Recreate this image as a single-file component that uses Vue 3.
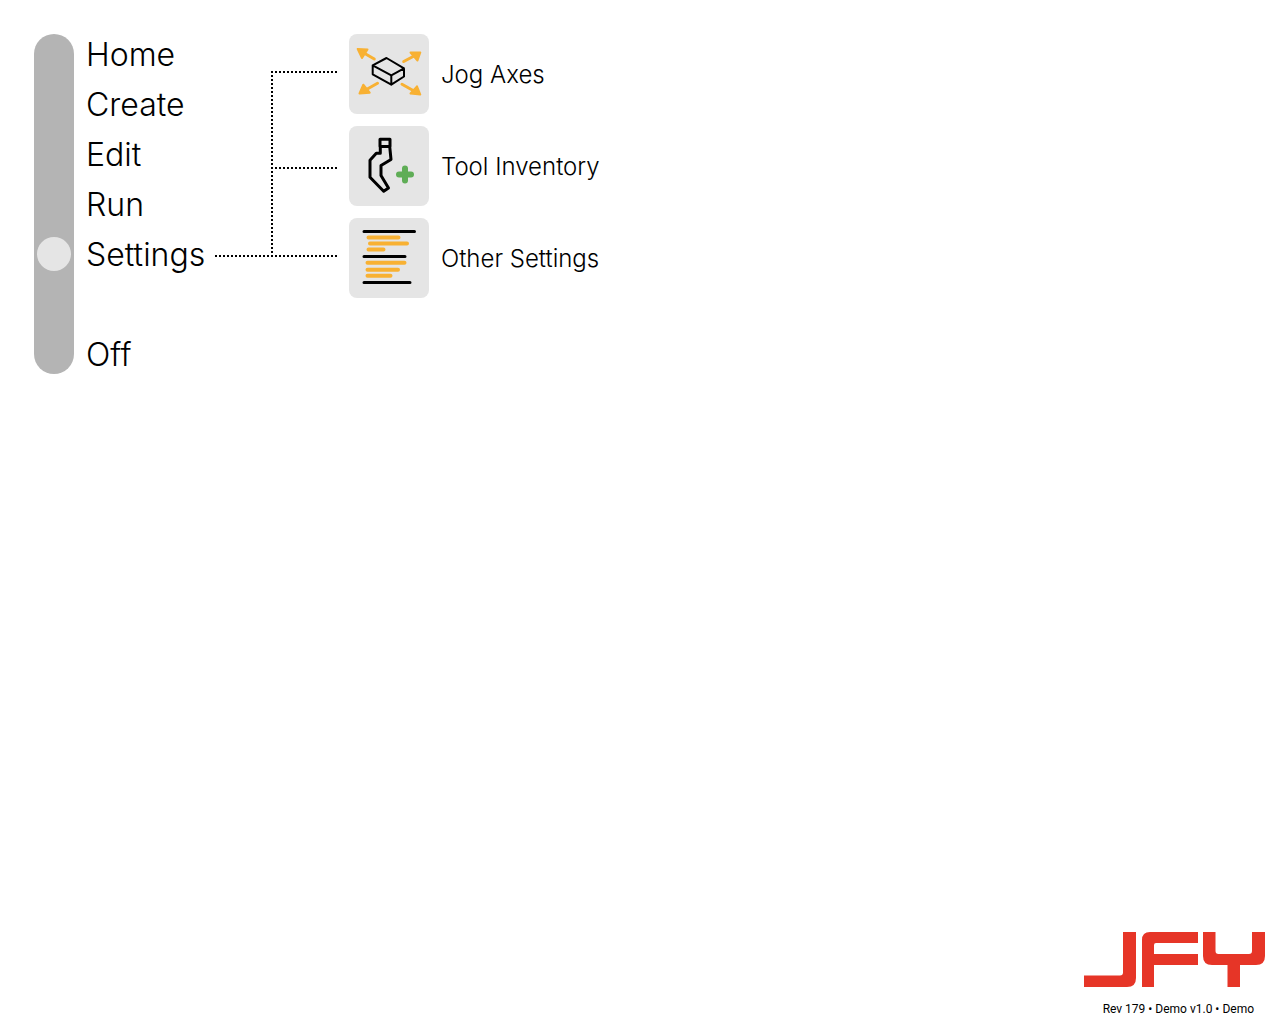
<script setup>
import { ref } from 'vue'

const sections = [
  { label: 'Home', position: 0 },
  { label: 'Create', position: 1 },
  { label: 'Edit', position: 2 },
  { label: 'Run', position: 3 },
  { label: 'Settings', position: 4 },
  { label: 'Off', position: 6 },
]
const selected = ref(4)
</script>

<template>
  <div class="page">
    <main class="menu">
      <input v-model.number="selected" class="slider" type="range" min="0" max="6" step="1" aria-label="Section" />

      <nav class="sections">
        <button
          v-for="section in sections"
          :key="section.label"
          type="button"
          class="section"
          :class="{ off: section.label === 'Off' }"
          @click="selected = section.position"
        >{{ section.label }}</button>
      </nav>

      <svg class="branches" width="122" height="186" viewBox="0 0 122 186" aria-hidden="true">
        <path d="M56 1H122M56 97H122M0 185H122M57 0V184" />
      </svg>

      <div class="options">
        <button type="button" class="option">
          <svg class="tile" viewBox="0 0 80 80" aria-hidden="true">
            <g class="amber arrows">
              <path d="M25.3 25L14 18.500M54.700 27.500L66 21.500M28.500 49.300L17 55.700M53 50.300L65 57" />
              <path class="head" d="M8.700 15L18.500 15.500L13 24ZM71.300 18.500L61.500 18.500L68.500 26.500ZM10.500 59.500L14.300 50.700L20.700 58.700ZM71.300 60.500L68 52.300L61.500 59.500Z" />
            </g>
            <path class="thin" d="M37.500 24L23.700 31.300L42.300 41.300L55 34.300ZM23.700 31.300V40.300L42.300 50.700L55 42.500V34.300M42.300 41.300V50.700" />
          </svg>
          <span>Jog Axes</span>
        </button>
        <button type="button" class="option">
          <svg class="tile" viewBox="0 0 80 80" aria-hidden="true">
            <path class="ink" d="M31 13.300H41V20.500H31ZM31.300 20.500V27.300H27.300L21 34.300V51.300L34.700 65.300L39.500 62L32 49.500V39.500L42 33.500L40.700 20.500" />
            <path class="plus" d="M56 42.500V54.500M50 48.500H62" />
          </svg>
          <span>Tool Inventory</span>
        </button>
        <button type="button" class="option">
          <svg class="tile" viewBox="0 0 80 80" aria-hidden="true">
            <path class="ink" d="M15 13.500H65.500M15 38.500H56M15 64.500H61" />
            <path class="amber" d="M19.500 19.500H49.500M21 25.500H58M19.500 31.500H34.500M18.500 44.800H55.500M18.500 51.700H49M18.500 57.700H41.500" />
          </svg>
          <span>Other Settings</span>
        </button>
      </div>
    </main>

    <footer class="brand">
      <svg class="logo" width="181" height="55" viewBox="0 0 181 55" role="img" aria-label="JFY">
        <path d="M39 0H52V46Q52 55 43 55H0V43.500H36Q39 43.500 39 40.500Z" />
        <path d="M114 0H66Q58 0 58 8V55H70V33H114V22H70V13Q70 11 72 11H114Z" />
        <path d="M119 0H131.500V19Q131.500 22 134.500 22H165Q168 22 168 19V0H181V24Q181 33 172 33H156V55H143.500V33H128Q119 33 119 24Z" />
      </svg>
      <span class="version">Rev 179 • Demo v1.0 • Demo</span>
    </footer>
  </div>
</template>

<style>
body {
  margin: 0;
  background: #fff;
}
</style>

<style scoped>
.page {
  box-sizing: border-box;
  display: flex;
  flex-direction: column;
  justify-content: space-between;
  min-height: 100vh;
  padding: 34px 15px 7px 34px;
  color: #000;
  font-family: "Century Gothic", Inter, sans-serif;
  font-weight: 300;
}

.menu {
  display: flex;
  align-items: flex-start;
}

.slider {
  appearance: none;
  writing-mode: vertical-lr;
  box-sizing: border-box;
  flex: none;
  width: 40px;
  height: 340px;
  margin: 0;
  padding: 3px;
  border-radius: 20px;
  background: #b4b4b4;
}

.slider::-webkit-slider-thumb {
  appearance: none;
  width: 34px;
  height: 34px;
  border-radius: 50%;
  background: #e5e5e5;
}

button {
  padding: 0;
  border: 0;
  background: none;
  color: inherit;
  font: inherit;
  text-align: left;
  cursor: pointer;
}

.sections {
  display: flex;
  flex-direction: column;
  min-width: 129px;
  margin: -4px 0 0 12px;
}

.section {
  font-size: 32px;
  line-height: 50px;
}

.off {
  margin-top: 50px;
}

.branches {
  flex: none;
  margin-top: 37px;
}

.branches path {
  fill: none;
  stroke: #000;
  stroke-width: 2;
  stroke-dasharray: 2 2;
}

.options {
  display: flex;
  flex-direction: column;
  gap: 12px;
  margin-left: 12px;
}

.option {
  display: flex;
  align-items: center;
  gap: 12px;
  font-size: 24px;
}

.tile {
  flex: none;
  width: 80px;
  height: 80px;
  border-radius: 8px;
  background: #e5e5e5;
}

.tile path {
  fill: none;
  stroke-linecap: round;
  stroke-linejoin: round;
}

.ink,
.thin {
  stroke: #000;
  stroke-width: 3;
}

.thin {
  stroke-width: 2;
}

.amber {
  stroke: #f8b133;
  stroke-width: 4;
}

.arrows {
  stroke-width: 3;
}

.tile .head {
  fill: #f8b133;
  stroke-width: 2;
}

.plus {
  stroke: #5fad56;
  stroke-width: 6;
}

.brand {
  display: flex;
  flex-direction: column;
  align-items: flex-end;
  gap: 14px;
  font: 400 12px/16px "Segoe UI", Roboto, sans-serif;
}

.version {
  margin-right: 11px;
}

.logo {
  fill: #e63527;
}
</style>
